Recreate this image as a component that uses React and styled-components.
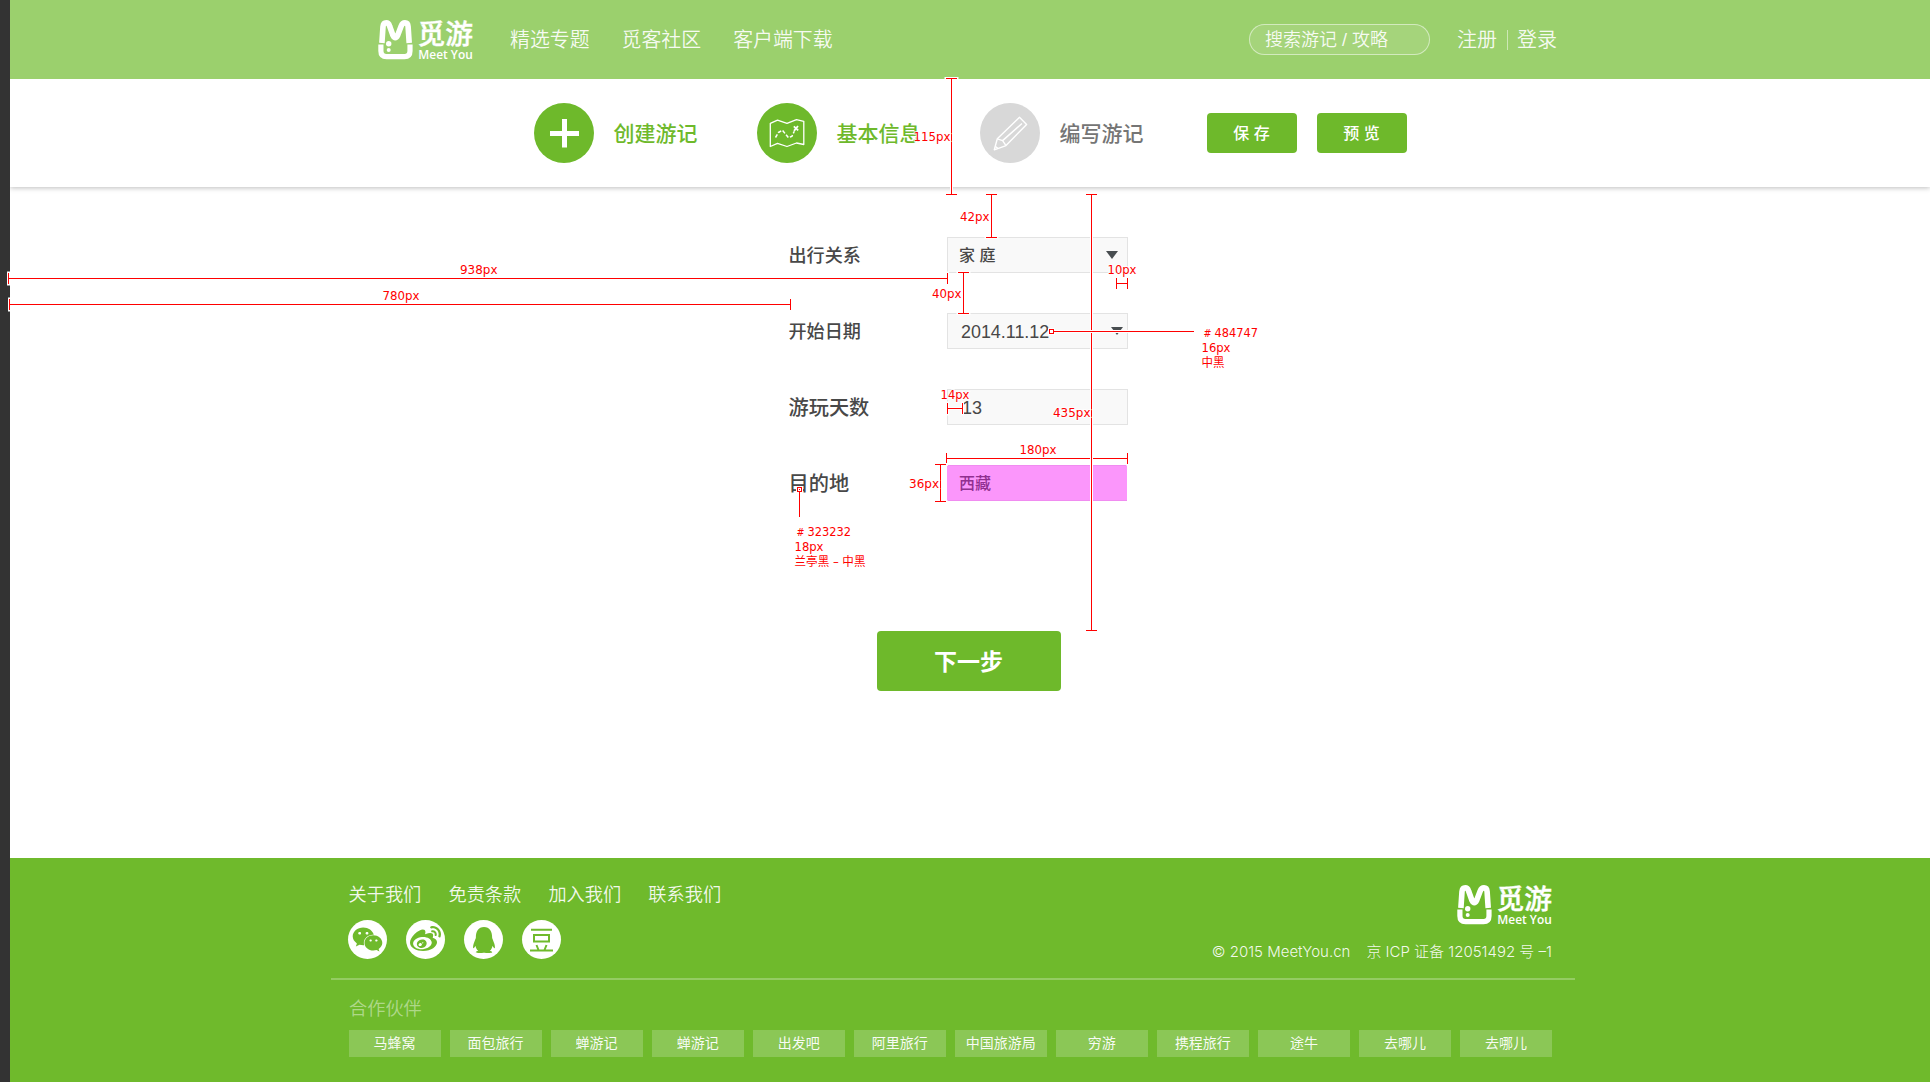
import React from "react";
import styled, { createGlobalStyle } from "styled-components";
import { FaWeixin, FaWeibo, FaQq } from "react-icons/fa";

const GREEN = "#6eb92b";

const GlobalStyle = createGlobalStyle`
  * { box-sizing: border-box; }
  body {
    margin: 0;
    background: #fff;
    font-family: "Liberation Sans", "Noto Sans CJK SC", sans-serif;
    overflow: hidden;
  }
`;

const Shell = styled.div`
  position: relative;
  display: flex;
  width: 1930px;
  height: 1082px;
  overflow: hidden;
`;

const Gutter = styled.div`
  position: relative;
  z-index: 2;
  flex: none;
  width: 10px;
  background: #333;
`;

const Page = styled.div`
  display: flex;
  flex: 1;
  flex-direction: column;
`;

const Header = styled.header`
  position: relative;
  z-index: 1;
  display: flex;
  align-items: center;
  flex: none;
  height: 79px;
  padding: 0 373px 0 368px;
  background: #9bd06d;
  color: rgba(255, 255, 255, 0.92);
  font-weight: 350;
`;

const Nav = styled.nav`
  display: flex;
  gap: 32px;
  margin-left: 37px;
  font-size: 19.9px;
  line-height: 30px;
`;

const NavLink = styled.a`
  white-space: nowrap;
`;

const Search = styled.div`
  display: flex;
  align-items: center;
  width: 181px;
  height: 31px;
  margin-left: auto;
  margin-bottom: 1px;
  padding: 0 0 3px 15px;
  border: 1px solid rgba(255, 255, 255, 0.5);
  border-radius: 16px;
  background: rgba(255, 255, 255, 0.1);
  font-size: 18px;
  white-space: nowrap;
`;

const Account = styled.div`
  display: flex;
  align-items: center;
  margin-left: 27px;
  font-size: 20px;
  line-height: 30px;
`;

const Separator = styled.span`
  width: 1px;
  height: 20px;
  margin: 0 9px 0 10px;
  background: rgba(255, 255, 255, 0.5);
`;

const Steps = styled.section`
  display: flex;
  align-items: center;
  flex: none;
  height: 108px;
  padding-left: 524px;
  background: #fff;
  box-shadow: 0 1px 5px rgba(0, 0, 0, 0.26);
`;

const Step = styled.div`
  display: flex;
  align-items: center;
  gap: 19.5px;
  width: 223px;
  color: ${(p) => (p.$muted ? "#757575" : GREEN)};
  font-size: 21px;
  font-weight: 500;
  white-space: nowrap;
`;

const StepName = styled.span`
  padding-bottom: 3px;
`;

const StepIcon = styled.span`
  display: flex;
  width: 60px;
  height: 60px;
  border-radius: 50%;
  background: ${(p) => (p.$muted ? "#d8d8d8" : GREEN)};
`;

const Button = styled.button`
  width: ${(p) => p.$width}px;
  height: ${(p) => p.$height}px;
  padding: 0 1px 3px 0;
  border: 0;
  border-radius: 4px;
  background: ${GREEN};
  color: #fff;
  font-family: inherit;
  font-size: ${(p) => p.$size}px;
  font-weight: ${(p) => p.$weight || 500};
`;

const Actions = styled.div`
  display: flex;
  gap: 20px;
  margin-left: 4px;
`;

const Main = styled.main`
  flex: 1;
  padding-top: 50px;
`;

const Form = styled.form`
  display: flex;
  flex-direction: column;
  gap: 40px;
  margin-left: 779px;
`;

const Row = styled.div`
  display: flex;
  align-items: center;
  height: 36px;
`;

const Label = styled.label`
  width: 158px;
  padding-bottom: 2px;
  color: #484848;
  font-size: ${(p) => p.$size}px;
  font-weight: 500;
  text-indent: -0.5px;
`;

const Field = styled.div`
  display: flex;
  align-items: center;
  justify-content: space-between;
  width: ${(p) => (p.$marked ? 180 : 181)}px;
  height: 36px;
  padding: 0 ${(p) => p.$right || 10}px 0 ${(p) => p.$left}px;
  border: 1px solid ${(p) => (p.$marked ? "#f08cf0" : "#e3e3e3")};
  border-width: ${(p) => (p.$marked ? "1px 0" : "1px")};
  background: ${(p) => (p.$marked ? "#fb96fb" : "#f9f9f9")};
  color: ${(p) => (p.$marked ? "#903090" : "#484747")};
  font-size: ${(p) => p.$size}px;
  font-weight: ${(p) => p.$weight || 400};
`;

const Value = styled.span`
  padding-bottom: ${(p) => (p.$latin ? 0 : 2)}px;
  padding-top: ${(p) => (p.$latin ? 2 : 0)}px;
`;

const Caret = styled.i`
  border: 6px solid transparent;
  border-top: 8px solid #484d50;
  border-bottom: 0;
`;

const Submit = styled.div`
  margin: 130px 0 0 867px;
`;

const Footer = styled.footer`
  flex: none;
  height: 224px;
  padding: 22px 355px 0 321px;
  background: #6fba2c;
  color: rgba(255, 255, 255, 0.92);
  font-weight: 350;
`;

const FooterTop = styled.div`
  display: flex;
  justify-content: space-between;
  height: 98px;
  padding: 0 23px 0 17px;
`;

const Links = styled.div`
  display: flex;
  gap: 27.2px;
  padding: 1px 0 0 0.5px;
  font-size: 18.2px;
  line-height: 28px;
`;

const Socials = styled.div`
  display: flex;
  align-items: center;
  gap: 19px;
  margin-top: 11px;
`;

const Social = styled.span`
  display: flex;
  align-items: center;
  justify-content: center;
  width: 39px;
  height: 39px;
  border-radius: 50%;
  background: #fff;
  color: #6fba2c;
`;

const Legal = styled.div`
  display: flex;
  flex-direction: column;
  align-items: flex-end;
  padding-top: 4.5px;
`;

const Copyright = styled.p`
  display: flex;
  gap: 16px;
  margin: 15px 0 0;
  font-family: Inter, "Noto Sans CJK SC", sans-serif;
  font-size: 15px;
  font-weight: 300;
  line-height: 24px;
  white-space: nowrap;
`;

const Partners = styled.div`
  margin: 0;
  padding: 16px 22px 0 17.5px;
  border-top: 2px solid rgba(255, 255, 255, 0.26);
`;

const PartnerTitle = styled.h2`
  margin: 0 0 7px 0.5px;
  color: rgba(255, 255, 255, 0.45);
  font-size: 18.2px;
  font-weight: 350;
  line-height: 27px;
`;

const PartnerList = styled.div`
  display: flex;
  gap: 9.05px;
`;

const Partner = styled.a`
  flex: none;
  width: 92px;
  height: 27px;
  background: rgba(255, 255, 255, 0.2);
  color: rgba(255, 255, 255, 0.95);
  font-size: 14px;
  font-weight: 400;
  line-height: 26px;
  text-align: center;
`;

const Redlines = styled.svg`
  position: absolute;
  z-index: 3;
  left: 0;
  top: 0;
  pointer-events: none;
  font-family: "DejaVu Sans", "Noto Sans CJK SC", sans-serif;
  font-size: 12px;
  fill: #f00;
`;

const Logo = () => (
  <svg width="95" height="40" viewBox="0 0 95 40" overflow="visible">
    <g fill="none" stroke="#fff" strokeLinejoin="round">
      <path
        strokeWidth="5.6"
        d="M3.9 23 L5 6.5 Q5.4 2.9 8.2 2.9 Q10.6 2.9 11.6 6 L15 15.5 Q17.3 20 19.6 15.5 L23.2 6 Q24.4 2.9 27 2.9 Q29.8 2.9 30.1 6.5 L31.2 23"
      />
      <path strokeWidth="5.2" d="M2.9 24.4 V31 Q2.9 36.6 8.5 36.6 H26.5 Q32 36.6 32 31 V24.4" />
    </g>
    <circle cx="10.7" cy="23.8" r="2.7" fill="#fff" />
    <circle cx="10.7" cy="30.1" r="2" fill="#fff" />
    <text
      x="39.5" y="23.8" fill="#fff" fontSize="27.5" fontWeight="500" textLength="55.5"
      stroke="#fff" strokeWidth="0.4"
      lengthAdjust="spacingAndGlyphs" fontFamily="'Noto Sans CJK SC', sans-serif"
    >
      觅游
    </text>
    <text
      x="40.3" y="38.8" fill="#fff" fontSize="13" fontWeight="600" textLength="54.5"
      lengthAdjust="spacingAndGlyphs" fontFamily="'Open Sans', sans-serif"
    >
      Meet You
    </text>
  </svg>
);

const PlusIcon = () => (
  <svg width="60" height="60" stroke="#fff" strokeWidth="5">
    <path d="M16 30.5 H45 M30.5 16 V44.5" />
  </svg>
);

const MapIcon = () => (
  <svg width="60" height="60" fill="none" stroke="#fff" strokeWidth="1.3" strokeLinejoin="round">
    <path d="M13.3 20.3 L20.5 17.2 L30 20.3 L39.5 16.6 L46.8 18.3 V41.5 L39.5 40 L30 43.5 L20.5 40.3 L13.3 43.5 Z" />
    <path strokeDasharray="3.6 1.8" strokeWidth="1.5" d="M18.5 34.5 L21.5 29.5 L25.3 27.2 L28.3 30.8 L31.5 34.8 L35 33.2 L37.3 28.3" />
    <path strokeWidth="1.8" d="M36.8 23.4 L41.2 27.4 M41 23 L37 27.8" />
  </svg>
);

const PencilIcon = () => (
  <svg width="60" height="60" fill="none" stroke="#fff" strokeWidth="1.4" strokeLinejoin="round">
    <path d="M39.5 14.3 L46.6 21.4 L26 42.6 L14.3 46.8 L17.3 35.8 Z" />
    <path d="M17.3 35.8 L22.6 37.6 L26 42.6 M22.6 37.6 L42 20.5" />
    <path d="M15.5 43.5 L17.8 45.4" />
  </svg>
);

const DoubanIcon = () => (
  <svg width="23" height="24" fill="none" stroke="currentColor" strokeWidth="2">
    <path d="M1 1.8 H22 M4 7 H19 V13.5 H4 Z M0 22.5 H23 M6.5 17 L8.5 22 M16.5 17 L14.5 22" />
  </svg>
);

const Halo = ({ d }) => (
  <>
    <path d={d} fill="none" stroke="#fff" strokeWidth="3" strokeLinecap="square" />
    <path d={d} fill="none" stroke="#f00" strokeWidth="1" shapeRendering="crispEdges" />
  </>
);

const Note = ({ x, y, w, children }) => (
  <text
    x={x} y={y} textLength={w} lengthAdjust="spacingAndGlyphs"
    stroke="#fff" strokeWidth="2" strokeOpacity="0.8" paintOrder="stroke"
  >
    {children}
  </text>
);

const vertical = (x, a, b) =>
  `M${x + 0.5} ${a + 0.5} V${b + 0.5} M${x - 5} ${a + 0.5} h11 M${x - 5} ${b + 0.5} h11`;
const horizontal = (y, a, b) =>
  `M${a + 0.5} ${y + 0.5} H${b + 0.5} M${a + 0.5} ${y - 5} v11 M${b + 0.5} ${y - 5} v11`;

const measures = [
  [vertical(951, 78, 194), "115px", 913.5, 141, 37],
  [vertical(991, 194, 237), "42px", 960, 221, 29.5],
  [vertical(963, 272, 313), "40px", 932, 298, 29.5],
  [horizontal(278, 8, 947), "938px", 460, 274, 37.5],
  [horizontal(304, 9, 790), "780px", 382.5, 300, 37],
  [horizontal(283, 1116, 1127), "10px", 1107.5, 274, 29],
  [horizontal(408, 947, 962), "14px", 940.5, 399, 29],
  [horizontal(458, 946, 1127), "180px", 1019.5, 454, 37],
  [vertical(940, 464, 501), "36px", 909, 488, 30],
  [vertical(1091, 194, 630), "435px", 1053, 417, 37.5],
];

const colourNotes = [
  ["484747", 1203.5, 337],
  ["323232", 796.5, 536],
];

const notes = [
  ["16px", 1201.5, 352, 29],
  ["中黑", 1201.5, 367, 23],
  ["18px", 794.5, 551, 29],
  ["兰亭黑 – 中黑", 794.5, 566, 71],
];

const Annotations = () => (
  <Redlines width="1930" height="1082">
    {measures.map(([d, text, x, y, w]) => (
      <g key={text}>
        <Halo d={d} />
        <Note x={x} y={y} w={w}>{text}</Note>
      </g>
    ))}
    <Halo d="M1054 331.5 H1194 M1049.5 329.5 h4 v4 h-4 z" />
    <Halo d="M799.5 492 V517 M797.5 487.5 h4 v4 h-4 z" />
    <rect x="799" y="489" width="1" height="1" />
    {colourNotes.map(([text, x, y]) => (
      <Note key={text} x={x} y={y} w={54.5}>
        <tspan fontSize="10">{"# "}</tspan>{text}
      </Note>
    ))}
    {notes.map(([text, x, y, w]) => (
      <Note key={text} x={x} y={y} w={w}>{text}</Note>
    ))}
  </Redlines>
);

const partners = [
  "马蜂窝", "面包旅行", "蝉游记", "蝉游记", "出发吧", "阿里旅行",
  "中国旅游局", "穷游", "携程旅行", "途牛", "去哪儿", "去哪儿",
];

export default function App() {
  return (
    <Shell>
      <GlobalStyle />
      <Gutter />
      <Page>
        <Header>
          <Logo />
          <Nav>
            <NavLink>精选专题</NavLink>
            <NavLink>觅客社区</NavLink>
            <NavLink>客户端下载</NavLink>
          </Nav>
          <Search>搜索游记 / 攻略</Search>
          <Account>
            <span>注册</span>
            <Separator />
            <span>登录</span>
          </Account>
        </Header>
        <Steps>
          <Step><StepIcon><PlusIcon /></StepIcon><StepName>创建游记</StepName></Step>
          <Step><StepIcon><MapIcon /></StepIcon><StepName>基本信息</StepName></Step>
          <Step $muted><StepIcon $muted><PencilIcon /></StepIcon><StepName>编写游记</StepName></Step>
          <Actions>
            <Button $width={90} $height={40} $size={16}>保 存</Button>
            <Button $width={90} $height={40} $size={16}>预 览</Button>
          </Actions>
        </Steps>
        <Main>
          <Form>
            <Row>
              <Label $size={18.1}>出行关系</Label>
              <Field $left={11} $size={16} $right={9} $weight={500}><Value>家 庭</Value><Caret /></Field>
            </Row>
            <Row>
              <Label $size={18.1}>开始日期</Label>
              <Field $left={13} $size={17.9} $right={4}><Value $latin>2014.11.12</Value><Caret /></Field>
            </Row>
            <Row>
              <Label $size={20.2}>游玩天数</Label>
              <Field $left={14} $size={18}><Value $latin>13</Value></Field>
            </Row>
            <Row>
              <Label $size={20.2}>目的地</Label>
              <Field $left={12} $size={16} $weight={500} $marked><Value>西藏</Value></Field>
            </Row>
          </Form>
          <Submit>
            <Button $width={184} $height={60} $size={23} $weight={700}>下一步</Button>
          </Submit>
        </Main>
        <Footer>
          <FooterTop>
            <div>
              <Links>
                <NavLink>关于我们</NavLink>
                <NavLink>免责条款</NavLink>
                <NavLink>加入我们</NavLink>
                <NavLink>联系我们</NavLink>
              </Links>
              <Socials>
                <Social><FaWeixin size={31} /></Social>
                <Social><FaWeibo size={31} /></Social>
                <Social><FaQq size={26} /></Social>
                <Social><DoubanIcon /></Social>
              </Socials>
            </div>
            <Legal>
              <Logo />
              <Copyright>
                <span>© 2015 MeetYou.cn</span>
                <span>京 ICP 证备 12051492 号 –1</span>
              </Copyright>
            </Legal>
          </FooterTop>
          <Partners>
            <PartnerTitle>合作伙伴</PartnerTitle>
            <PartnerList>
              {partners.map((name, i) => (
                <Partner key={i}>{name}</Partner>
              ))}
            </PartnerList>
          </Partners>
        </Footer>
      </Page>
      <Annotations />
    </Shell>
  );
}
